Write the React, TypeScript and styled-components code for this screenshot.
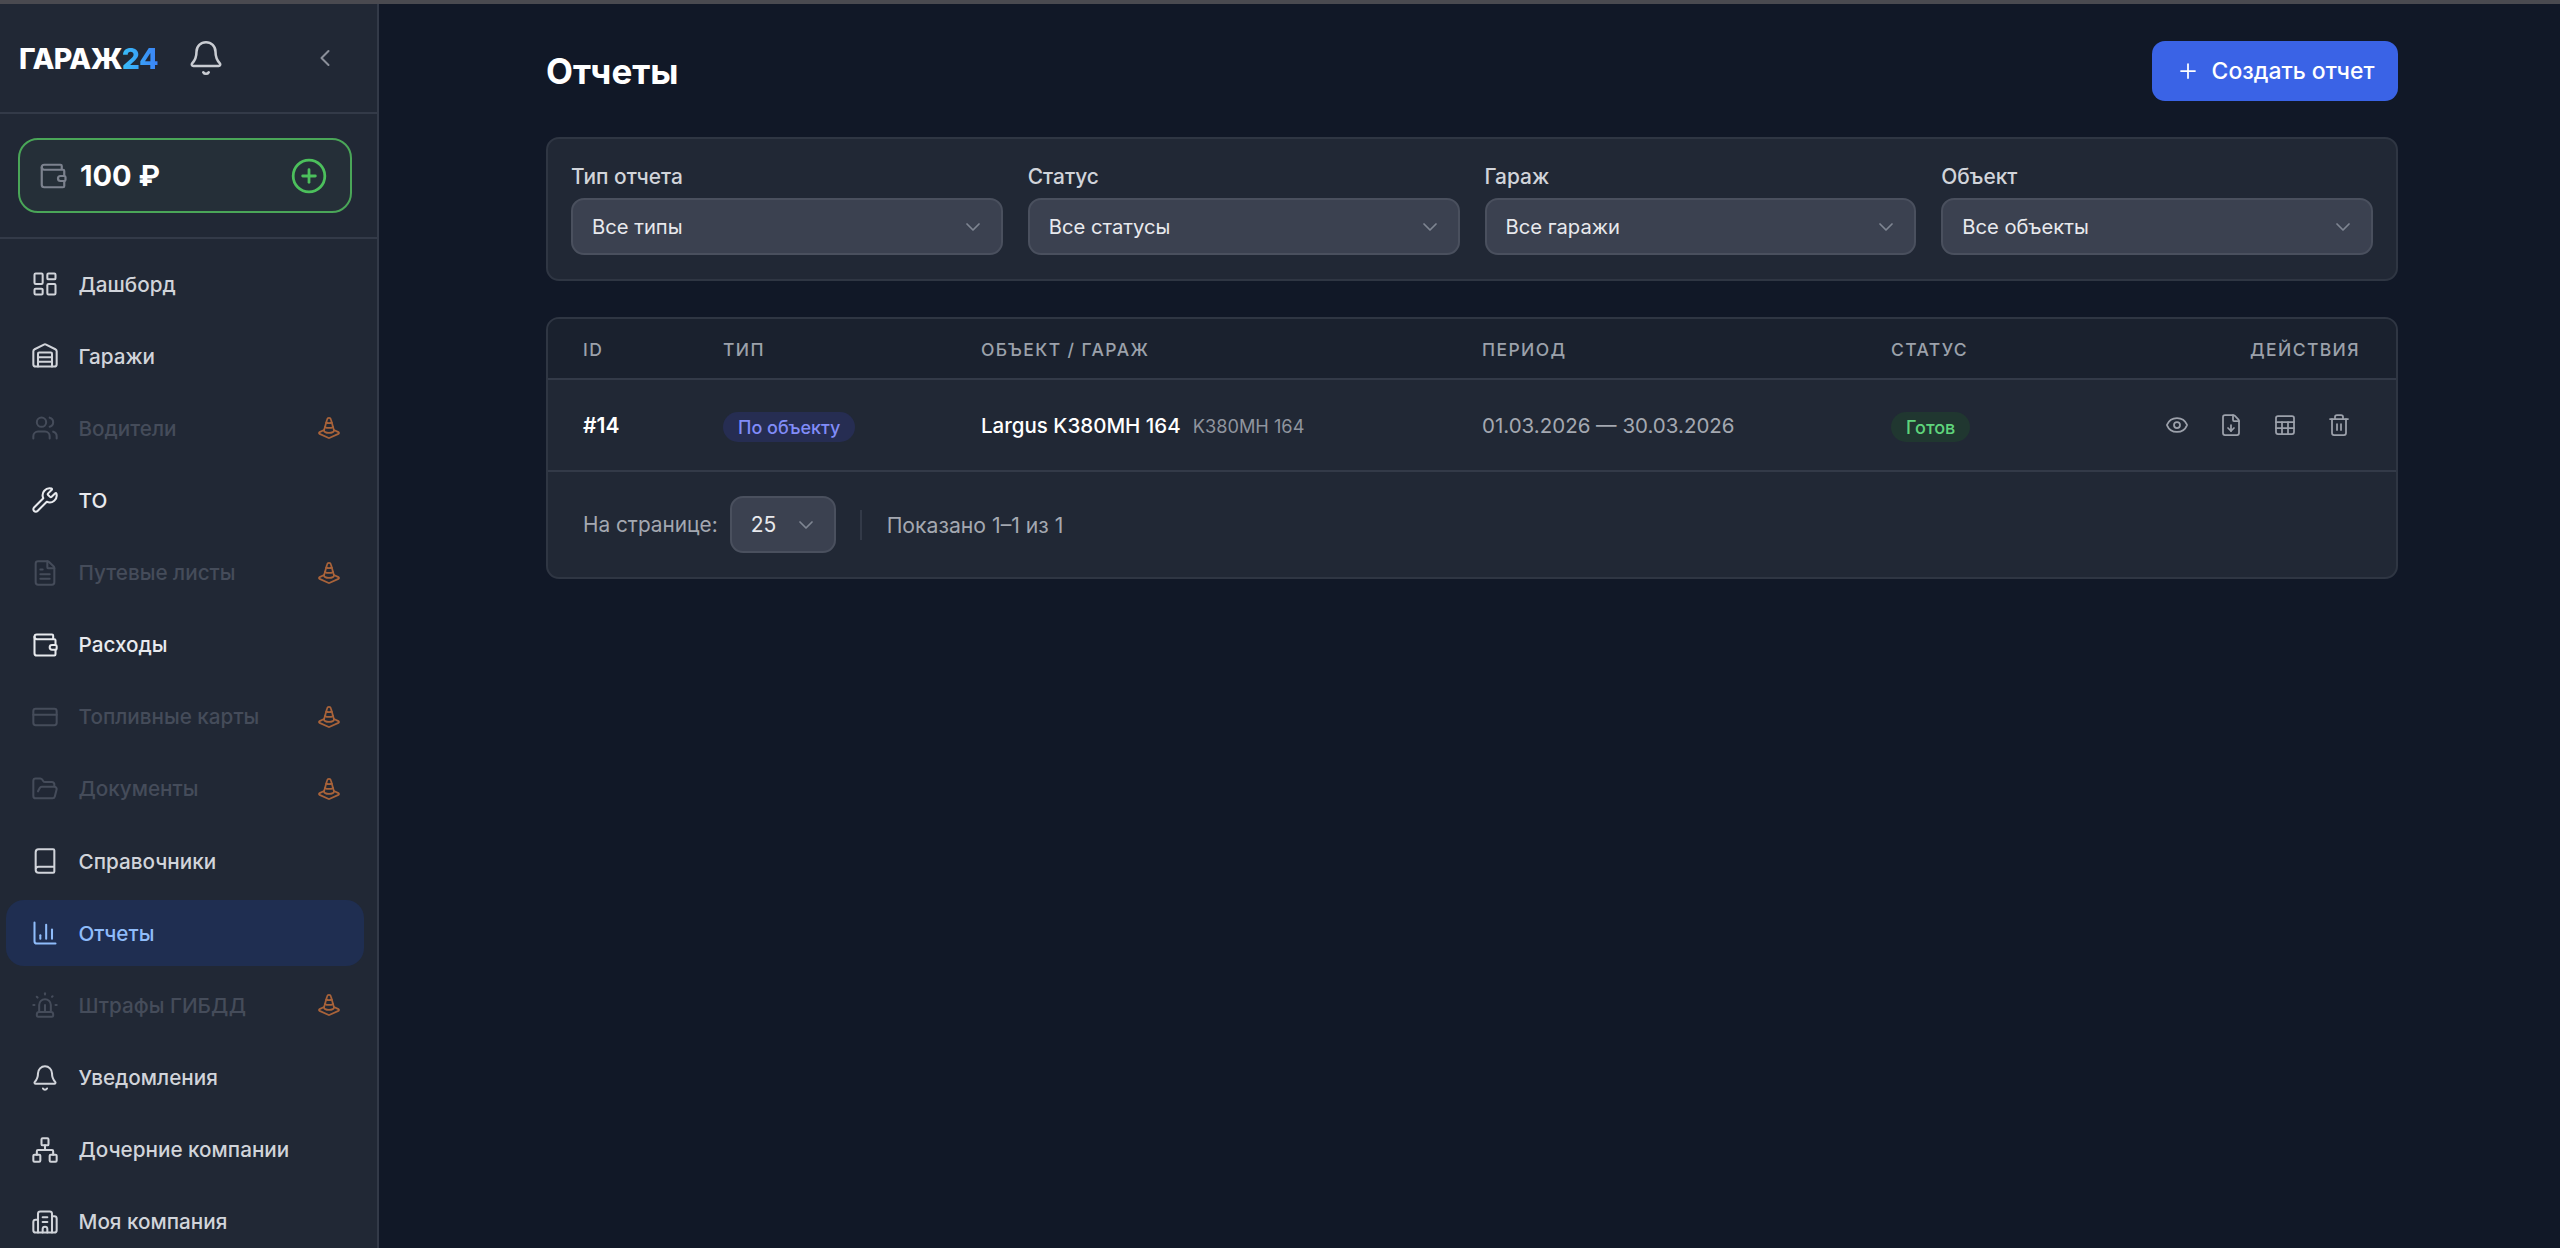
import React, { FC, ReactNode } from 'react';
import styled, { createGlobalStyle } from 'styled-components';
import {
    Bell, Book, Building2, ChartColumn, ChevronDown, ChevronLeft, CirclePlus, CreditCard, Eye, FileDown, FileText,
    FolderOpen, LayoutDashboard, LucideIcon, Network, Plus, Sheet, Siren, TrafficCone, Trash2, Users, Wallet,
    Warehouse, Wrench,
} from 'lucide-react';

const GlobalStyle = createGlobalStyle`
    html, body {
        margin: 0;
        height: 100%;
        overflow: hidden;
        background: #111827;
    }
    * {
        box-sizing: border-box;
    }
    body {
        font-family: Inter, 'Noto Sans', sans-serif;
    }
`;

const Page = styled.div`
    height: 1248px;
    display: flex;
    flex-direction: column;
    overflow: hidden;
`;

const TopStrip = styled.div`
    height: 4px;
    flex: none;
    background: #4a4a50;
`;

const Body = styled.div`
    flex: 1;
    min-height: 0;
    display: flex;
`;

const Sidebar = styled.aside`
    width: 379px;
    flex: none;
    background: #212835;
    border-right: 2px solid #333a48;
    overflow: hidden;
`;

const SidebarHead = styled.div`
    height: 110px;
    display: flex;
    align-items: center;
    padding: 0 38px 0 19px;
    border-bottom: 2px solid #333a48;
`;

const Logo = styled.div`
    font-size: 28.5px;
    font-weight: 800;
    letter-spacing: -0.6px;
    color: #fff;
    width: 166px;
`;

const LogoAccent = styled.span`
    background: linear-gradient(90deg, #38bdf8, #3b82f6);
    -webkit-background-clip: text;
    background-clip: text;
    color: transparent;
`;

const HeadBell = styled(Bell)`
    color: #c9ccd2;
    margin-left: 2px;
`;

const Collapse = styled(ChevronLeft)`
    color: #8b909a;
    margin-left: auto;
`;

const BalanceWrap = styled.div`
    height: 125px;
    padding: 24px 25px 0 18px;
    border-bottom: 2px solid #333a48;
`;

const Balance = styled.div`
    height: 75px;
    display: flex;
    align-items: center;
    padding: 0 22px 0 18px;
    background: #252f38;
    border: 2px solid #4aa658;
    border-radius: 20px;
`;

const BalanceIcon = styled(Wallet)`
    color: #7c828e;
`;

const BalanceValue = styled.span`
    margin-left: 12px;
    font-size: 29px;
    font-weight: 700;
    color: #fff;
`;

const BalanceAdd = styled(CirclePlus)`
    color: #4cc05c;
    margin-left: auto;
`;

const Nav = styled.nav`
    display: flex;
    flex-direction: column;
    gap: 6.15px;
    padding: 12px 13px 0 6px;
`;

const NavRow = styled.div<{ $state: 'normal' | 'bright' | 'off' | 'active' }>`
    height: 66px;
    flex: none;
    display: flex;
    align-items: center;
    gap: 19.5px;
    padding: 0 23px 0 25px;
    border-radius: 18px;
    font-size: 20.7px;
    font-weight: 500;
    background: ${(p) => (p.$state === 'active' ? '#1f2e51' : 'transparent')};
    color: ${(p) =>
        p.$state === 'active' ? '#8fbcfa' : p.$state === 'off' ? '#454c5a' : p.$state === 'bright' ? '#e8eaee' : '#d1d4da'};
`;

const NavLabel = styled.span`
    flex: 1;
    white-space: nowrap;
`;

const SoonIcon = styled(TrafficCone)`
    color: #a9633a;
`;

const Main = styled.main`
    flex: 1;
    min-width: 0;
    padding: 37px 0 0 167px;
`;

const Content = styled.div`
    width: 1852px;
    display: flex;
    flex-direction: column;
    gap: 36px;
`;

const PageHead = styled.div`
    height: 60px;
    display: flex;
    align-items: center;
    justify-content: space-between;
`;

const Title = styled.h1`
    margin: 0;
    font-size: 35px;
    font-weight: 700;
    color: #fff;
`;

const CreateButton = styled.button`
    width: 246px;
    height: 60px;
    display: flex;
    align-items: center;
    justify-content: center;
    gap: 12px;
    border: 0;
    border-radius: 13px;
    background: #3a63e6;
    color: #fff;
    font-family: inherit;
    font-size: 22.9px;
    font-weight: 500;
`;

const Panel = styled.section`
    background: #212835;
    border: 2px solid #2f3643;
    border-radius: 13px;
`;

const Filters = styled(Panel)`
    height: 144px;
    padding: 25px 23px;
    display: grid;
    grid-template-columns: repeat(4, 1fr);
    gap: 25px;
`;

const Field = styled.div`
    display: flex;
    flex-direction: column;
    gap: 8px;
`;

const FieldLabel = styled.label`
    font-size: 20.9px;
    line-height: 26px;
    font-weight: 500;
    color: #d1d4da;
`;

const SelectBox = styled.div`
    height: 57px;
    display: flex;
    align-items: center;
    justify-content: space-between;
    padding: 0 19px;
    background: #3b4150;
    border: 2px solid #4a505e;
    border-radius: 13px;
    font-size: 20.2px;
    color: #e8e9ed;
`;

const Chevron = styled(ChevronDown)`
    color: #7f8592;
    margin-right: -3px;
`;

const TableRow = styled.div`
    display: grid;
    grid-template-columns: 140px 258px 501px 409px 1fr;
    align-items: center;
    padding: 0 36px 0 35px;
`;

const TableHead = styled(TableRow)`
    height: 61px;
    padding-top: 2px;
    background: #1a212e;
    border-radius: 11px 11px 0 0;
    border-bottom: 2px solid #333a48;
    font-size: 17.5px;
    font-weight: 500;
    letter-spacing: 1.4px;
    color: #9ca1ab;
`;

const ActionsHead = styled.div`
    text-align: right;
`;

const DataRow = styled(TableRow)`
    height: 92px;
    border-bottom: 2px solid #333a48;
`;

const IdCell = styled.span`
    font-size: 21px;
    font-weight: 600;
    color: #fff;
`;

const Badge = styled.span<{ $tone: 'blue' | 'green' }>`
    display: inline-flex;
    align-items: center;
    height: 30px;
    padding: 0 15px;
    border-radius: 15px;
    font-size: 18px;
    font-weight: 500;
    background: ${(p) => (p.$tone === 'blue' ? '#262d52' : '#203730')};
    color: ${(p) => (p.$tone === 'blue' ? '#818cf8' : '#5fd47c')};
    transform: translateY(2px);
`;

const BadgeCell = styled.div``;

const ObjectCell = styled.div`
    display: flex;
    align-items: baseline;
    gap: 12px;
`;

const ObjectName = styled.span`
    font-size: 20.5px;
    font-weight: 500;
    color: #fff;
`;

const ObjectPlate = styled.span`
    font-size: 18.2px;
    color: #8f949e;
`;

const Period = styled.span`
    font-size: 20.5px;
    color: #a4a8b1;
`;

const Actions = styled.div`
    display: flex;
    justify-content: flex-end;
    gap: 14px;
    margin-right: 1px;
`;

const ActionButton = styled.button`
    width: 40px;
    height: 40px;
    padding: 0;
    display: flex;
    align-items: center;
    justify-content: center;
    border: 0;
    background: transparent;
    color: #9ca1ab;
`;

const TableFoot = styled.div`
    height: 105px;
    display: flex;
    align-items: center;
    padding: 0 36px 0 35px;
    font-size: 20.8px;
    color: #a4a8b1;
`;

const PageSize = styled(SelectBox)`
    width: 106px;
    margin-left: 12px;
    font-size: 21px;
`;

const FootDivider = styled.div`
    width: 2px;
    height: 30px;
    margin: 0 24px;
    background: #333a48;
`;

const FootInfo = styled.span`
    margin-left: 1px;
    font-size: 21.2px;
`;

const StatusCell = styled.div`
    display: flex;
    align-items: center;
    justify-content: space-between;
`;

type NavItem = {
    label: string;
    icon: LucideIcon;
    state?: 'normal' | 'bright' | 'off' | 'active';
};

const navItems: NavItem[] = [
    { label: 'Дашборд', icon: LayoutDashboard },
    { label: 'Гаражи', icon: Warehouse },
    { label: 'Водители', icon: Users, state: 'off' },
    { label: 'ТО', icon: Wrench, state: 'bright' },
    { label: 'Путевые листы', icon: FileText, state: 'off' },
    { label: 'Расходы', icon: Wallet, state: 'bright' },
    { label: 'Топливные карты', icon: CreditCard, state: 'off' },
    { label: 'Документы', icon: FolderOpen, state: 'off' },
    { label: 'Справочники', icon: Book },
    { label: 'Отчеты', icon: ChartColumn, state: 'active' },
    { label: 'Штрафы ГИБДД', icon: Siren, state: 'off' },
    { label: 'Уведомления', icon: Bell },
    { label: 'Дочерние компании', icon: Network },
    { label: 'Моя компания', icon: Building2 },
];

const filters = [
    { label: 'Тип отчета', value: 'Все типы' },
    { label: 'Статус', value: 'Все статусы' },
    { label: 'Гараж', value: 'Все гаражи' },
    { label: 'Объект', value: 'Все объекты' },
];

const actionIcons: LucideIcon[] = [Eye, FileDown, Sheet, Trash2];

const Select: FC<{ children: ReactNode }> = ({ children }) => (
    <SelectBox>
        {children}
        <Chevron size={24} strokeWidth={1.75} />
    </SelectBox>
);

export default function App() {
    return (
        <Page>
            <GlobalStyle />
            <TopStrip />
            <Body>
                <Sidebar>
                    <SidebarHead>
                        <Logo>
                            ГАРАЖ<LogoAccent>24</LogoAccent>
                        </Logo>
                        <HeadBell size={38} strokeWidth={1.6} />
                        <Collapse size={28} strokeWidth={1.75} />
                    </SidebarHead>
                    <BalanceWrap>
                        <Balance>
                            <BalanceIcon size={30} strokeWidth={1.75} />
                            <BalanceValue>100 ₽</BalanceValue>
                            <BalanceAdd size={38} strokeWidth={1.75} />
                        </Balance>
                    </BalanceWrap>
                    <Nav>
                        {navItems.map(({ label, icon: Icon, state = 'normal' }) => (
                            <NavRow key={label} $state={state}>
                                <Icon size={28} strokeWidth={1.75} />
                                <NavLabel>{label}</NavLabel>
                                {state === 'off' && <SoonIcon size={24} strokeWidth={1.75} />}
                            </NavRow>
                        ))}
                    </Nav>
                </Sidebar>
                <Main>
                    <Content>
                        <PageHead>
                            <Title>Отчеты</Title>
                            <CreateButton>
                                <Plus size={24} strokeWidth={1.75} />
                                Создать отчет
                            </CreateButton>
                        </PageHead>
                        <Filters>
                            {filters.map((f) => (
                                <Field key={f.label}>
                                    <FieldLabel>{f.label}</FieldLabel>
                                    <Select>{f.value}</Select>
                                </Field>
                            ))}
                        </Filters>
                        <Panel>
                            <TableHead>
                                <span>ID</span>
                                <span>ТИП</span>
                                <span>ОБЪЕКТ / ГАРАЖ</span>
                                <span>ПЕРИОД</span>
                                <StatusCell>
                                    <span>СТАТУС</span>
                                    <ActionsHead>ДЕЙСТВИЯ</ActionsHead>
                                </StatusCell>
                            </TableHead>
                            <DataRow>
                                <IdCell>#14</IdCell>
                                <BadgeCell>
                                    <Badge $tone="blue">По объекту</Badge>
                                </BadgeCell>
                                <ObjectCell>
                                    <ObjectName>Largus K380MH 164</ObjectName>
                                    <ObjectPlate>K380MH 164</ObjectPlate>
                                </ObjectCell>
                                <Period>01.03.2026 — 30.03.2026</Period>
                                <StatusCell>
                                    <Badge $tone="green">Готов</Badge>
                                    <Actions>
                                        {actionIcons.map((Icon, i) => (
                                            <ActionButton key={i}>
                                                <Icon size={24} strokeWidth={1.75} />
                                            </ActionButton>
                                        ))}
                                    </Actions>
                                </StatusCell>
                            </DataRow>
                            <TableFoot>
                                На странице:
                                <PageSize>
                                    25
                                    <Chevron size={24} strokeWidth={1.75} />
                                </PageSize>
                                <FootDivider />
                                <FootInfo>Показано 1–1 из 1</FootInfo>
                            </TableFoot>
                        </Panel>
                    </Content>
                </Main>
            </Body>
        </Page>
    );
}
